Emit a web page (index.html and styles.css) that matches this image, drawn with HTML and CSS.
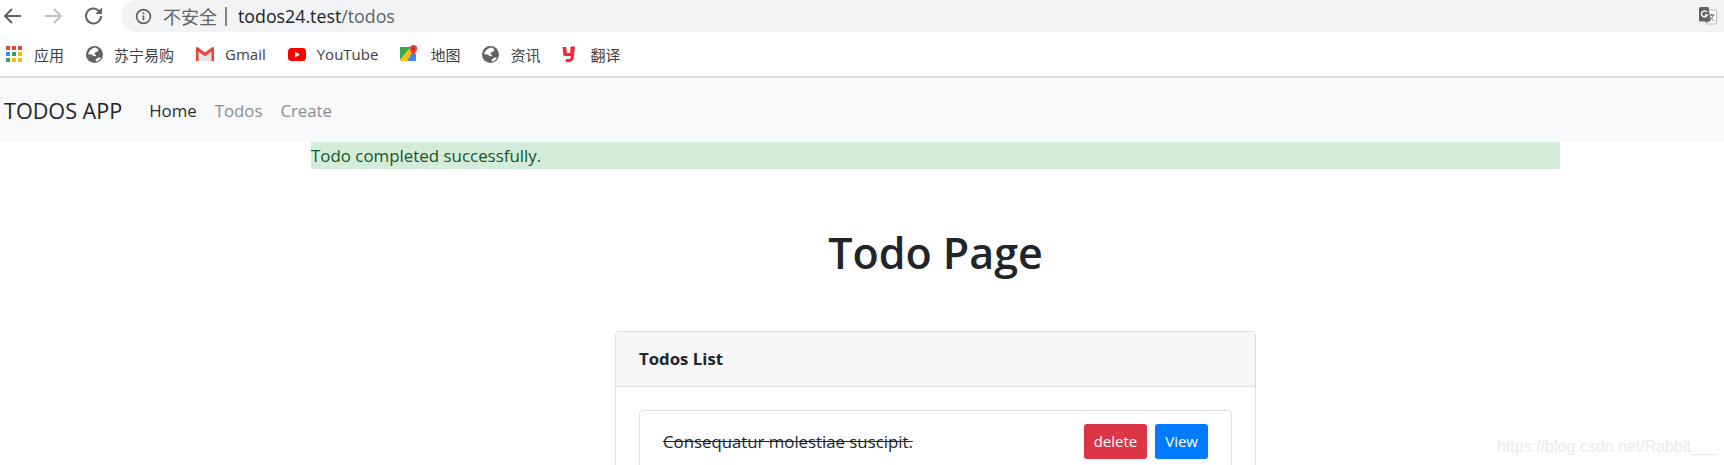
FILE: index.html
```html
<!DOCTYPE html>
<html lang="zh-CN">
<head>
  <meta charset="UTF-8">
  <title>Todos</title>
  <link rel="stylesheet" href="styles.css">
</head>
<body>
  <div class="toolbar">
    <svg class="tool-icon" viewBox="0 0 24 24"><path d="M20 12H5M11 5l-7 7 7 7" fill="none" stroke="#5f6368" stroke-width="2"/></svg>
    <svg class="tool-icon" viewBox="0 0 24 24"><path d="M4 12h15M13 5l7 7-7 7" fill="none" stroke="#bdc1c6" stroke-width="2"/></svg>
    <svg class="tool-icon" viewBox="0 0 24 24"><path d="M20 12a7.500 7.500 0 1 1-2.200-5.300L20 9" fill="none" stroke="#5f6368" stroke-width="2"/><path d="M21 3.500V10h-6.500z" fill="#5f6368"/></svg>
    <div class="omnibox">
      <svg class="info-icon" viewBox="0 0 16 16"><circle cx="8" cy="8" r="6.5" fill="none" stroke="#5f6368" stroke-width="1.6"/><rect x="7.2" y="7" width="1.6" height="4.6" fill="#5f6368"/><rect x="7.2" y="4.2" width="1.6" height="1.6" fill="#5f6368"/></svg>
      <span class="not-secure">不安全</span>
      <span class="omni-sep"></span>
      <span class="url">todos24.test<span class="url-path">/todos</span></span>
      <svg class="translate-icon" viewBox="0 0 18 18">
        <rect x="7" y="3" width="10.5" height="14" rx="1" fill="#fff" stroke="#b5b8bc"/>
        <path d="M10 8h5.500M12.700 7v1.500M14.500 8c-.6 2.500-2 4-4 5M11 9.500c.8 1.700 2 3 3.800 4" fill="none" stroke="#5f6368"/>
        <path d="M1.500 0h8l2 14.500H8.500V16L6 14.500H1.500A1.500 1.500 0 0 1 0 13V1.500A1.500 1.500 0 0 1 1.500 0z" fill="#5f6368"/>
        <path d="M8 5.200A3 3 0 1 0 8.300 8H5.800" fill="none" stroke="#fff" stroke-width="1.400"/>
      </svg>
    </div>
  </div>

  <div class="bookmarks">
    <a class="bookmark">
      <svg class="bm-icon" viewBox="0 0 16 16">
        <rect x="0" y="0" width="4" height="4" fill="#ea4335"/><rect x="6" y="0" width="4" height="4" fill="#ea4335"/><rect x="12" y="0" width="4" height="4" fill="#ea4335"/>
        <rect x="0" y="6" width="4" height="4" fill="#4285f4"/><rect x="6" y="6" width="4" height="4" fill="#34a853"/><rect x="12" y="6" width="4" height="4" fill="#fbbc05"/>
        <rect x="0" y="12" width="4" height="4" fill="#34a853"/><rect x="6" y="12" width="4" height="4" fill="#fbbc05"/><rect x="12" y="12" width="4" height="4" fill="#fbbc05"/>
      </svg>
      应用
    </a>
    <a class="bookmark">
      <svg class="bm-icon bm-globe" viewBox="0 0 16 16"><circle cx="8" cy="8" r="8" fill="#5f6368"/><path d="M8.500 1.500c2 .5 3.500 1.500 3 3-.5 1.400-3 1-3.500 2.500-.3 1 1.500 1 1.500 2 0 1.200-2 .8-3 0-1.200-1-3.500-1.500-4.500-.8.200-3 3-6 6.500-6.700zM10 12c1.500-1 3-1.500 4-1-.6 1.500-2.500 3.300-4.500 3.500-.7-.8-.4-1.800.5-2.500z" fill="#fff"/></svg>
      苏宁易购
    </a>
    <a class="bookmark">
      <svg class="bm-icon bm-gmail" viewBox="0 0 18 14"><path d="M1 1l8 6 8-6v13H1z" fill="#e4e4e4"/><path d="M0 14V1.500C0 .3 1.300-.3 2.200.4L9 5.500 15.800.4C16.700-.3 18 .3 18 1.500V14h-2.500V4.500L9 9.300 2.500 4.500V14z" fill="#ea4335"/></svg>
      Gmail
    </a>
    <a class="bookmark">
      <svg class="bm-icon bm-youtube" viewBox="0 0 18 13"><rect width="18" height="13" rx="3.500" fill="#f00"/><path d="M7 3.500L12 6.500 7 9.500z" fill="#fff"/></svg>
      YouTube
    </a>
    <a class="bookmark">
      <svg class="bm-icon bm-maps" viewBox="0 0 18 18">
        <path d="M0 2h11L0 15z" fill="#34a853"/><path d="M0 15L11 2l3 5-7 9H1z" fill="#fbbc05"/><path d="M7 16h9V9l-4-1z" fill="#4285f4"/>
        <path d="M13.500 0a3.700 3.700 0 0 0-3.700 3.700c0 2.500 3.700 6.300 3.700 6.300s3.700-3.800 3.700-6.300A3.700 3.700 0 0 0 13.500 0z" fill="#ea4335"/><circle cx="13.500" cy="3.700" r="1.300" fill="#a52714"/>
      </svg>
      地图
    </a>
    <a class="bookmark">
      <svg class="bm-icon bm-globe" viewBox="0 0 16 16"><circle cx="8" cy="8" r="8" fill="#5f6368"/><path d="M8.500 1.500c2 .5 3.500 1.500 3 3-.5 1.400-3 1-3.500 2.500-.3 1 1.500 1 1.500 2 0 1.200-2 .8-3 0-1.200-1-3.500-1.500-4.500-.8.200-3 3-6 6.500-6.700zM10 12c1.500-1 3-1.500 4-1-.6 1.500-2.500 3.300-4.500 3.500-.7-.8-.4-1.800.5-2.500z" fill="#fff"/></svg>
      资讯
    </a>
    <a class="bookmark">
      <svg class="bm-icon bm-youdao" viewBox="0 0 14 16"><path d="M.5 1h3.700l.6 6h3.400l.4-6.500H13l-1.300 11.500c-.2 2.500-2.500 4-5.500 4H3.500l.5-3h3c1 0 1.500-.6 1.600-1.700l.1-1.300H3c-1 0-1.500-.5-1.600-1.500z" fill="#f8243c"/></svg>
      翻译
    </a>
  </div>

  <nav class="navbar">
    <a class="navbar-brand">TODOS APP</a>
    <a class="nav-link active">Home</a>
    <a class="nav-link">Todos</a>
    <a class="nav-link">Create</a>
  </nav>

  <div class="container">
    <div class="alert">Todo completed successfully.</div>
    <h1 class="page-title">Todo Page</h1>

    <div class="card">
      <div class="card-header">Todos List</div>
      <div class="card-body">
        <ul class="todo-list">
          <li class="todo-item">
            <span class="todo-done">Consequatur molestiae suscipit.</span>
            <span class="todo-actions">
              <a class="btn btn-danger">delete</a>
              <a class="btn btn-primary">View</a>
            </span>
          </li>
        </ul>
      </div>
    </div>
  </div>

  <div class="watermark">https://blog.csdn.net/Rabbit___</div>
</body>
</html>
```

FILE: styles.css
```css
html, body {
  height: 465px;
  overflow: hidden;
}
body {
  margin: 0;
  background: #fff;
  color: #212529;
  font-family: "Open Sans", "Noto Sans CJK SC", sans-serif;
}
a {
  text-decoration: none;
}

/* browser chrome */
.toolbar {
  display: flex;
  align-items: center;
  height: 32px;
  padding-left: 1px;
}
.tool-icon {
  width: 24px;
  height: 24px;
  margin-right: 16px;
  flex-shrink: 0;
}
.omnibox {
  flex: 1;
  display: flex;
  align-items: center;
  height: 32px;
  padding-left: 14px;
  background: #f1f3f4;
  border-radius: 16px 0 0 16px;
}
.info-icon {
  width: 17px;
  height: 17px;
  margin-right: 11px;
}
.not-secure {
  font-size: 18px;
  color: #5f6368;
}
.omni-sep {
  width: 2px;
  height: 19px;
  margin: 0 11px 0 8px;
  background: #80868b;
}
.url {
  font-size: 17.800px;
  color: #202124;
}
.url-path {
  color: #5f6368;
}
.translate-icon {
  width: 18px;
  height: 18px;
  margin-left: auto;
  margin-right: 7px;
}
.bookmarks {
  display: flex;
  align-items: center;
  height: 44px;
  padding-left: 6px;
  border-bottom: 2px solid #dadce0;
}
.bookmark {
  display: flex;
  align-items: center;
  margin-right: 22px;
  font-size: 15px;
  color: #3c4043;
}
.bm-icon {
  width: 16px;
  height: 16px;
  margin-right: 12px;
}
.bm-globe {
  width: 17px;
  height: 17px;
  margin-right: 11px;
}
.bm-gmail {
  width: 18px;
  height: 14px;
  margin-right: 11px;
}
.bm-youtube {
  width: 18px;
  height: 13px;
  margin-right: 11px;
}
.bm-maps {
  width: 18px;
  height: 18px;
}
.bm-youdao {
  width: 14px;
  margin-right: 14px;
}

/* navbar */
.navbar {
  display: flex;
  align-items: center;
  height: 64px;
  padding-left: 4px;
  background: #f8f9fa;
}
.navbar-brand {
  margin-right: 27px;
  font-size: 21.6px;
  color: #212529;
}
.nav-link {
  margin-right: 18px;
  font-size: 16.8px;
  color: #8a8d90;
}
.nav-link.active {
  color: #2b2e31;
}

/* page */
.container {
  width: 1249px;
  margin-left: 311px;
}
.alert {
  height: 27px;
  line-height: 27px;
  font-size: 16.9px;
  background: #d4edda;
  color: #155724;
}
.page-title {
  margin: 58px 0 52px;
  font-size: 43px;
  font-weight: 600;
  line-height: 52px;
  text-align: center;
}
.card {
  box-sizing: border-box;
  width: 641px;
  margin-left: 304px;
  border: 1px solid #dfdfdf;
  border-radius: 4px;
}
.card-header {
  height: 54px;
  line-height: 54px;
  padding-left: 23px;
  font-size: 16.8px;
  font-weight: 700;
  background: #f7f7f7;
  border-bottom: 1px solid #dfdfdf;
}
.card-body {
  padding: 23px 23px 0;
}
.todo-list {
  margin: 0;
  padding: 0;
  list-style: none;
}
.todo-item {
  display: flex;
  align-items: center;
  justify-content: space-between;
  height: 61px;
  padding: 0 23px;
  border: 1px solid #dfdfdf;
  border-radius: 4px;
}
.todo-done {
  font-size: 16.8px;
  text-decoration: line-through;
}
.todo-actions {
  display: flex;
  gap: 8px;
}
.btn {
  height: 35px;
  line-height: 35px;
  padding: 0 10px;
  font-size: 15px;
  color: #fff;
  border-radius: 3px;
}
.btn-danger {
  background: #dc3545;
}
.btn-primary {
  background: #007bff;
}

/* csdn watermark */
.watermark {
  position: absolute;
  left: 1497px;
  top: 438px;
  font-family: "Liberation Sans", sans-serif;
  font-size: 16px;
  color: #ebebeb;
}
```
